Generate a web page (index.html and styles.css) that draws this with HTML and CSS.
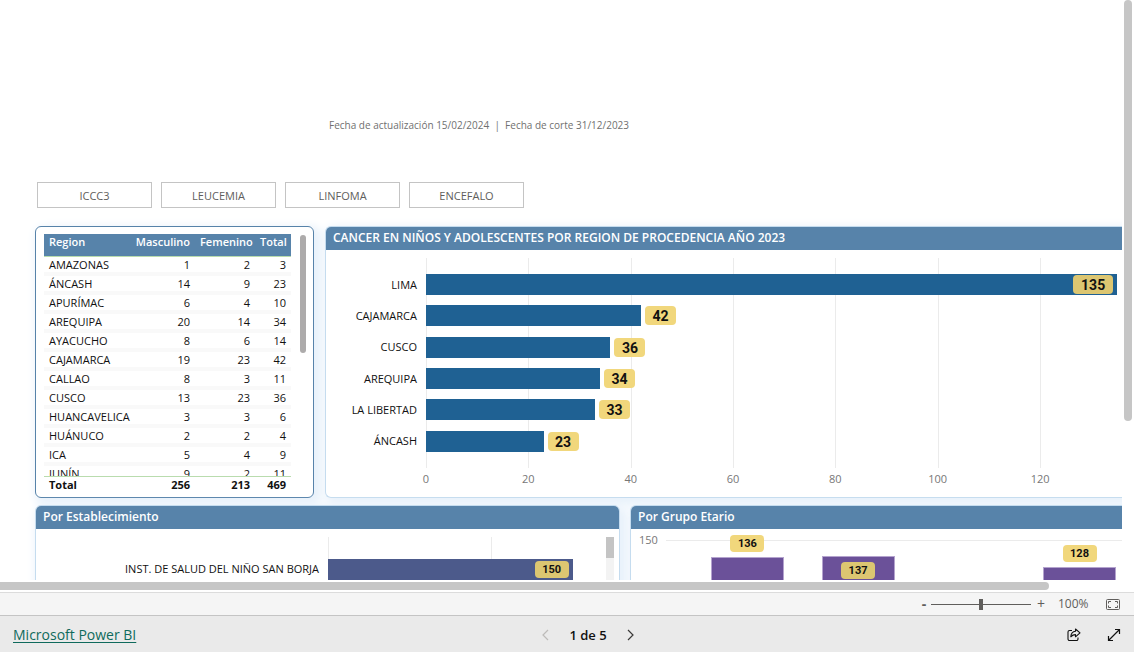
FILE: index.html
```html
<!DOCTYPE html>
<html lang="es">
<head>
<meta charset="utf-8">
<meta name="viewport" content="width=device-width, initial-scale=1">
<title>Microsoft Power BI</title>
<link rel="stylesheet" href="styles.css">
</head>
<body>
<main class="viewport">
  <div class="canvas">
    <p class="dates">Fecha de actualización 15/02/2024 &nbsp;|&nbsp; Fecha de corte 31/12/2023</p>

    <nav class="slicer" aria-label="Tipo">
      <button type="button">ICCC3</button>
      <button type="button">LEUCEMIA</button>
      <button type="button">LINFOMA</button>
      <button type="button">ENCEFALO</button>
    </nav>

    <div class="row row-top">
      <section class="panel panel-table">
        <div class="table-wrap">
          <table>
            <thead>
              <tr><th class="c-region">Region</th><th class="c-masc">Masculino</th><th class="c-fem">Femenino</th><th class="c-total">Total</th></tr>
            </thead>
            <tbody>
              <tr><td>AMAZONAS</td><td>1</td><td>2</td><td>3</td></tr>
              <tr><td>ÁNCASH</td><td>14</td><td>9</td><td>23</td></tr>
              <tr><td>APURÍMAC</td><td>6</td><td>4</td><td>10</td></tr>
              <tr><td>AREQUIPA</td><td>20</td><td>14</td><td>34</td></tr>
              <tr><td>AYACUCHO</td><td>8</td><td>6</td><td>14</td></tr>
              <tr><td>CAJAMARCA</td><td>19</td><td>23</td><td>42</td></tr>
              <tr><td>CALLAO</td><td>8</td><td>3</td><td>11</td></tr>
              <tr><td>CUSCO</td><td>13</td><td>23</td><td>36</td></tr>
              <tr><td>HUANCAVELICA</td><td>3</td><td>3</td><td>6</td></tr>
              <tr><td>HUÁNUCO</td><td>2</td><td>2</td><td>4</td></tr>
              <tr><td>ICA</td><td>5</td><td>4</td><td>9</td></tr>
              <tr><td>JUNÍN</td><td>9</td><td>2</td><td>11</td></tr>
            </tbody>
            <tfoot>
              <tr><td>Total</td><td>256</td><td>213</td><td>469</td></tr>
            </tfoot>
          </table>
        </div>
        <div class="table-scroll"></div>
      </section>

      <section class="panel panel-open">
        <h2>CANCER EN NIÑOS Y ADOLESCENTES POR REGION DE PROCEDENCIA AÑO 2023</h2>
        <div class="hchart">
          <div class="cats">
            <span>LIMA</span><span>CAJAMARCA</span><span>CUSCO</span><span>AREQUIPA</span><span>LA LIBERTAD</span><span>ÁNCASH</span>
          </div>
          <div class="plot">
            <div class="bars">
              <div class="track"><div class="bar bar-inside" style="width:99.3%"><span class="badge">135</span></div></div>
              <div class="track"><div class="bar" style="width:30.9%"></div><span class="badge">42</span></div>
              <div class="track"><div class="bar" style="width:26.5%"></div><span class="badge">36</span></div>
              <div class="track"><div class="bar" style="width:25%"></div><span class="badge">34</span></div>
              <div class="track"><div class="bar" style="width:24.3%"></div><span class="badge">33</span></div>
              <div class="track"><div class="bar" style="width:16.9%"></div><span class="badge">23</span></div>
            </div>
            <div class="axis">
              <span>0</span><span>20</span><span>40</span><span>60</span><span>80</span><span>100</span><span>120</span>
            </div>
          </div>
        </div>
      </section>
    </div>

    <div class="row row-bottom">
      <section class="panel">
        <h2>Por Establecimiento</h2>
        <div class="est">
          <div class="est-cats"><span>INST. DE SALUD DEL NIÑO SAN BORJA</span></div>
          <div class="est-plot"><div class="est-bar" style="width:88%"><span class="badge badge-sm">150</span></div></div>
          <div class="est-scroll"><div class="est-thumb"></div></div>
        </div>
      </section>
      <section class="panel panel-open">
        <h2>Por Grupo Etario</h2>
        <div class="ages">
          <span class="tick">150</span>
          <div class="age-plot">
            <div class="age"><span class="badge badge-sm">136</span><div class="column"></div></div>
            <div class="age age-b"><div class="column"><span class="badge badge-sm">137</span></div></div>
            <div class="age"></div>
            <div class="age age-d"><span class="badge badge-sm">128</span><div class="column"></div></div>
          </div>
        </div>
      </section>
    </div>
  </div>
  <div class="vscroll"><div class="vthumb"></div></div>
  <div class="hscroll"><div class="hthumb"></div></div>
</main>

<div class="zoombar">
  <button type="button" class="zoom-step" aria-label="Alejar">-</button>
  <input class="zoom-range" type="range" min="0" max="200" value="100" aria-label="Zoom">
  <button type="button" class="zoom-step zoom-in" aria-label="Acercar">+</button>
  <span class="zoom-value">100%</span>
  <button type="button" class="icon" aria-label="Ajustar a la página">
    <svg width="14" height="11" viewBox="0 0 14 11" fill="none" stroke="#605e5c"><rect x=".5" y=".5" width="13" height="10" rx="1"/><path d="M5 2.500H2.500V4.500M2.500 6.500V8.500H5M9 2.500h2.500V4.500M11.500 6.500V8.500H9"/></svg>
  </button>
</div>

<footer class="statusbar">
  <a href="#">Microsoft Power BI</a>
  <div class="pager">
    <button type="button" class="icon" aria-label="Página anterior" disabled>
      <svg width="7" height="12" viewBox="0 0 7 12" fill="none" stroke="#bdbbb9" stroke-width="1.200"><path d="M6 1 1 6l5 5"/></svg>
    </button>
    <span>1 de 5</span>
    <button type="button" class="icon" aria-label="Página siguiente">
      <svg width="7" height="12" viewBox="0 0 7 12" fill="none" stroke="#3b3a39" stroke-width="1.200"><path d="m1 1 5 5-5 5"/></svg>
    </button>
  </div>
  <div class="actions">
    <button type="button" class="icon" aria-label="Compartir">
      <svg width="14" height="14" viewBox="0 0 14 14" fill="none" stroke="#111" stroke-width="1.100" stroke-linejoin="round"><path d="M5 2.500H2.500a1.500 1.500 0 0 0-1.500 1.500v7A1.500 1.500 0 0 0 2.500 12.500h7A1.500 1.500 0 0 0 11 11V9.500"/><path d="M8.500 1v2.200C5.500 3.400 4 5.200 3.800 8.800 5.200 7.200 6.600 6.600 8.500 6.600v2.200L13 4.900Z"/></svg>
    </button>
    <button type="button" class="icon" aria-label="Pantalla completa">
      <svg width="14" height="14" viewBox="0 0 14 14" fill="none" stroke="#111" stroke-width="1.200"><path d="M8 1.500h4.500V6M12.500 1.500l-11 11M1.500 8v4.500H6"/></svg>
    </button>
  </div>
</footer>
</body>
</html>
```

FILE: styles.css
```css
* { box-sizing: border-box; }

body {
  margin: 0;
  height: 100vh;
  display: flex;
  flex-direction: column;
  overflow: hidden;
  background: #fff;
  color: #111;
  font-family: "Open Sans", "Noto Sans", sans-serif;
  font-size: 11px;
  line-height: 16px;
}

button { font: inherit; color: inherit; cursor: pointer; }
h2, p { margin: 0; }

/* Report area with its scrollbars */
.viewport {
  flex: 1;
  min-height: 0;
  display: grid;
  grid-template-columns: minmax(0, 1fr) 12px;
  grid-template-rows: minmax(0, 1fr) 12px;
}
.canvas { overflow: hidden; padding: 117px 0 0 35px; }
.vscroll { padding: 0 2px; }
.vthumb { height: 421px; border-radius: 4px; background: #c6c6c6; }
.hscroll { padding: 2px 0; }
.hthumb { width: 1049px; height: 8px; border-radius: 0 4px 4px 0; background: #c6c6c6; }

.dates { padding-left: 294px; color: #707070; font-size: 10px; }

.slicer {
  display: grid;
  grid-template-columns: repeat(4, 115px);
  gap: 9px;
  margin: 49px 0 18px 2px;
}
.slicer button {
  height: 26px;
  padding: 1px 0 0;
  border: 1px solid #c4c4c4;
  background: #fff;
  color: #605e5c;
}

/* Panels */
.row { display: grid; }
.row-top { grid-template-columns: 279px minmax(0, 1fr); gap: 11px; }
.row-bottom { grid-template-columns: minmax(0, 585fr) minmax(0, 492fr); gap: 10px; margin-top: 7px; }
.panel {
  border: 1px solid #c5dcef;
  border-radius: 6px;
  background: #fff;
  box-shadow: 4px 4px 10px 4px #e9f2fb;
}
.panel h2 {
  height: 23px;
  padding-left: 7px;
  border-radius: 5px 5px 0 0;
  background: #5783aa;
  color: #fff;
  font-size: 12px;
  font-weight: 600;
  line-height: 21px;
  white-space: nowrap;
}
.panel-open { border-right: 0; border-radius: 6px 0 0 6px; }
.panel-open h2 { border-radius: 5px 0 0 0; }

/* Region table */
.panel-table {
  display: flex;
  gap: 9px;
  padding: 7px 7px 3px 8px;
  border-color: #5783aa;
}
.table-wrap { flex: 1; height: 260px; overflow: hidden; }
.table-scroll { width: 6px; height: 118px; margin-top: 1px; border-radius: 3px; background: #adabab; }
table { width: 100%; table-layout: fixed; border-collapse: separate; border-spacing: 0; }
th, td { padding: 0 5px; text-align: right; }
th:first-child, td:first-child { text-align: left; }
thead { position: sticky; top: 0; }
th {
  height: 23px;
  padding-bottom: 6px;
  border-bottom: 1px solid #b9dcae;
  background: #5783aa;
  color: #fff;
  font-weight: 600;
}
.c-region { width: 86px; }
.c-masc { width: 65px; }
.c-fem { width: 60px; }
tbody td { height: 19px; border-bottom: 4px solid #f9f9f9; line-height: 15px; }
tfoot { position: sticky; bottom: 0; }
tfoot td { height: 18px; padding-bottom: 2px; border-top: 1px solid #b9dcae; background: #fff; font-weight: 700; line-height: 15px; }

/* Value labels */
.badge {
  flex: none;
  min-width: 31px;
  height: 19px;
  padding: 0 7px;
  border-radius: 4px;
  background: #f1d77c;
  color: #111;
  font-family: Roboto, sans-serif;
  font-size: 14px;
  font-weight: 700;
  line-height: 20px;
  text-align: center;
}
.badge-sm { min-width: 34px; height: 17px; font-size: 11px; line-height: 18px; }

/* Bars by region */
.hchart { display: flex; padding-top: 8px; }
.cats { width: 91px; margin-right: 9px; padding: 11px 0; height: 210px; display: grid; align-items: center; text-align: right; }
.plot { flex: 1; min-width: 0; }
.bars {
  display: grid;
  align-items: center;
  height: 210px;
  padding: 11px 0;
  background: repeating-linear-gradient(to right, #ebebeb 0 1px, transparent 1px 14.706%);
}
.track { display: flex; align-items: center; gap: 4px; }
.bar { height: 21px; background: #1f6193; }
.bar-inside { display: flex; align-items: center; justify-content: flex-end; padding-right: 4px; }
.bar-inside .badge { min-width: 40px; background: #dcc671; }
.axis { display: grid; grid-template-columns: repeat(7, 14.706%); padding: 3px 0 10px; color: #777; }
.axis span { width: 40px; margin-left: -20px; text-align: center; }

/* Bars by facility */
.est { display: flex; padding-top: 8px; }
.est-cats { flex: none; width: 283px; padding: 24px 0; text-align: right; }
.est-plot {
  flex: 1;
  min-width: 0;
  margin-left: 9px;
  padding-top: 22px;
  background: repeating-linear-gradient(to right, #ebebeb 0 1px, transparent 1px 58.8%);
}
.est-bar { display: flex; justify-content: flex-end; height: 24px; padding: 2px 4px 0 0; background: #4c5a8b; }
.est-bar .badge { background: #dcc671; }
.est-scroll { width: 8px; margin-right: 5px; background: #f3f3f3; }
.est-thumb { height: 21px; background: #c4c4c4; }

/* Columns by age group */
.ages { display: flex; padding: 3px 0 0 8px; }
.tick { width: 27px; color: #777; }
.age-plot {
  flex: 1;
  min-width: 0;
  height: 64px;
  display: grid;
  grid-template-columns: repeat(4, 25.75%);
  padding-left: 26px;
  background: linear-gradient(#ebebeb, #ebebeb) 0 8px / 100% 1px no-repeat;
}
.age { display: flex; flex-direction: column; align-items: center; gap: 5px; padding-top: 3px; }
.age-b { padding-top: 24px; }
.age-d { padding-top: 13px; }
.column { width: 66%; flex: 1; display: flex; justify-content: center; align-items: flex-start; padding-top: 5px; border: 1px solid #b4a3ce; background: #6b5199; }
.column .badge { background: #dcc671; }

/* Zoom bar */
.zoombar {
  display: flex;
  align-items: center;
  justify-content: flex-end;
  height: 24px;
  padding-right: 14px;
  border-top: 1px solid #dcdcdc;
  border-bottom: 1px solid #c4c4c4;
  background: #f5f5f5;
  color: #605e5c;
  font-size: 12px;
}
.zoom-step { width: 14px; padding: 0; border: 0; background: none; font-size: 14px; font-weight: 700; }
.zoom-in { width: 20px; font-weight: 400; }
.zoom-range { appearance: none; width: 100px; height: 11px; margin: 0; background: linear-gradient(#605e5c, #605e5c) center / 100% 1px no-repeat; }
.zoom-range::-webkit-slider-thumb { appearance: none; width: 4px; height: 11px; background: #605e5c; }
.zoom-value { width: 48px; padding-left: 7px; }
.icon { display: flex; padding: 0; border: 0; background: none; }
.zoombar .icon { margin-left: 7px; }

/* Status bar */
.statusbar {
  display: grid;
  grid-template-columns: 1fr auto 1fr;
  align-items: center;
  height: 36px;
  padding: 2px 13px 0;
  background: #eaeaea;
}
.statusbar a { color: #0f6a5c; font-size: 14px; line-height: 20px; text-underline-offset: 2px; }
.pager { display: flex; align-items: center; gap: 20px; padding-left: 42px; font-size: 13px; font-weight: 600; }
.actions { display: flex; justify-content: flex-end; gap: 26px; }
```
